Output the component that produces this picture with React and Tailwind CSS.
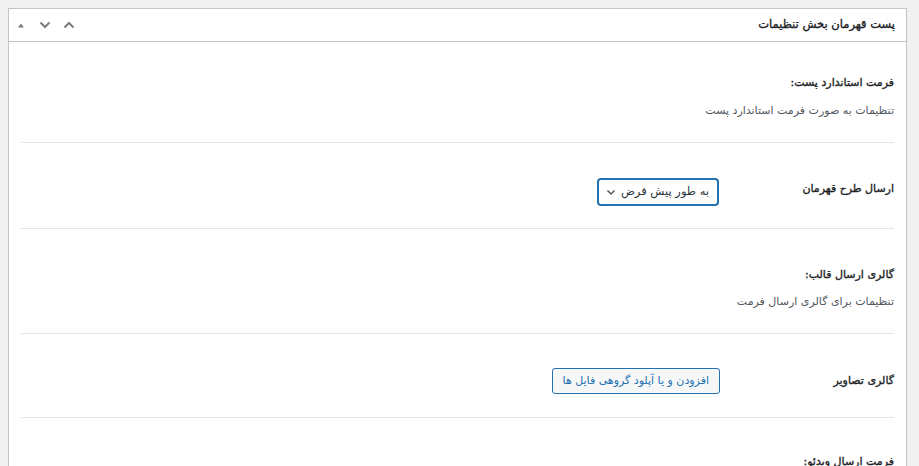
import React from "react";

const font = { fontFamily: '"DejaVu Sans", "Noto Sans", sans-serif' };

function Sep() {
  return <div className="h-px bg-[#e6e6e6] mx-3" />;
}

export default function App() {
  return (
    <div className="h-[466px] bg-[#f0f0f1] pt-2 pl-2 pr-[12px] overflow-hidden" style={font}>
      <div dir="rtl" className="bg-white border border-[#c3c4c7] h-[500px]">
        <div className="h-[33px] border-b border-[#c3c4c7] flex items-center justify-between pr-[11px]">
          <div className="text-[11.5px] text-[#1d2327] [-webkit-text-stroke:0.35px_#1d2327]">پست قهرمان بخش تنظیمات</div>
          <div dir="ltr" className="flex items-center">
            <div className="w-[24px] h-[24px] flex items-center justify-center">
              <svg width="10" height="10" viewBox="0 0 10 10"><path d="M2 7.5 L5 3.5 L8 7.5 Z" fill="#787c82" /></svg>
            </div>
            <div className="w-[24px] h-[24px] flex items-center justify-center">
              <svg width="14" height="14" viewBox="0 0 14 14"><path d="M2.5 4.5 L7 9 L11.5 4.5" fill="none" stroke="#787c82" strokeWidth="2" /></svg>
            </div>
            <div className="w-[24px] h-[24px] flex items-center justify-center">
              <svg width="14" height="14" viewBox="0 0 14 14"><path d="M2.5 9.5 L7 5 L11.5 9.5" fill="none" stroke="#787c82" strokeWidth="2" /></svg>
            </div>
          </div>
        </div>
        <div className="pt-[31px] pb-[21px] px-3 text-[11px]">
          <div className="leading-[20px] text-[#1d2327] [-webkit-text-stroke:0.35px_#1d2327]">فرمت استاندارد پست:</div>
          <div className="leading-[20px] mt-2 text-[#50575e]">تنظیمات به صورت فرمت استاندارد پست</div>
        </div>
        <Sep />
        <div className="pt-[35px] pb-[22px] px-3 flex items-center text-[11px]">
          <div className="w-[175px] text-[#1d2327] leading-[20px] -mt-[7px] [-webkit-text-stroke:0.35px_#1d2327]">ارسال طرح قهرمان</div>
          <div className="h-[28px] w-[122px] border-2 border-[#2271b1] rounded-[4px] flex items-center justify-between pr-[8px] pl-[7px] text-[#2c3338] text-[11.5px]">
            <span>به طور پیش فرض</span>
            <svg width="10" height="10" viewBox="0 0 10 10"><path d="M1.5 3.5 L5 7 L8.5 3.5" fill="none" stroke="#50575e" strokeWidth="1.5" /></svg>
          </div>
        </div>
        <Sep />
        <div className="pt-[36px] pb-[21px] px-3 text-[11px]">
          <div className="leading-[20px] text-[#1d2327] [-webkit-text-stroke:0.35px_#1d2327]">گالری ارسال قالب:</div>
          <div className="leading-[20px] mt-[7px] text-[#50575e]">تنظیمات برای گالری ارسال فرمت</div>
        </div>
        <Sep />
        <div className="pt-[34px] pb-[23px] px-3 flex items-center text-[11px]">
          <div className="w-[174px] text-[#1d2327] leading-[20px] [-webkit-text-stroke:0.35px_#1d2327]">گالری تصاویر</div>
          <div className="h-[26px] px-[10px] border border-[#2271b1] bg-[#f6f7f7] rounded-[3px] flex items-center text-[#2271b1]">
            افزودن و یا آپلود گروهی فایل ها
          </div>
        </div>
        <Sep />
        <div className="pt-[34px] px-3 text-[11px]">
          <div className="leading-[20px] text-[#1d2327] [-webkit-text-stroke:0.35px_#1d2327]">فرمت ارسال ویدئو:</div>
        </div>
      </div>
    </div>
  );
}
